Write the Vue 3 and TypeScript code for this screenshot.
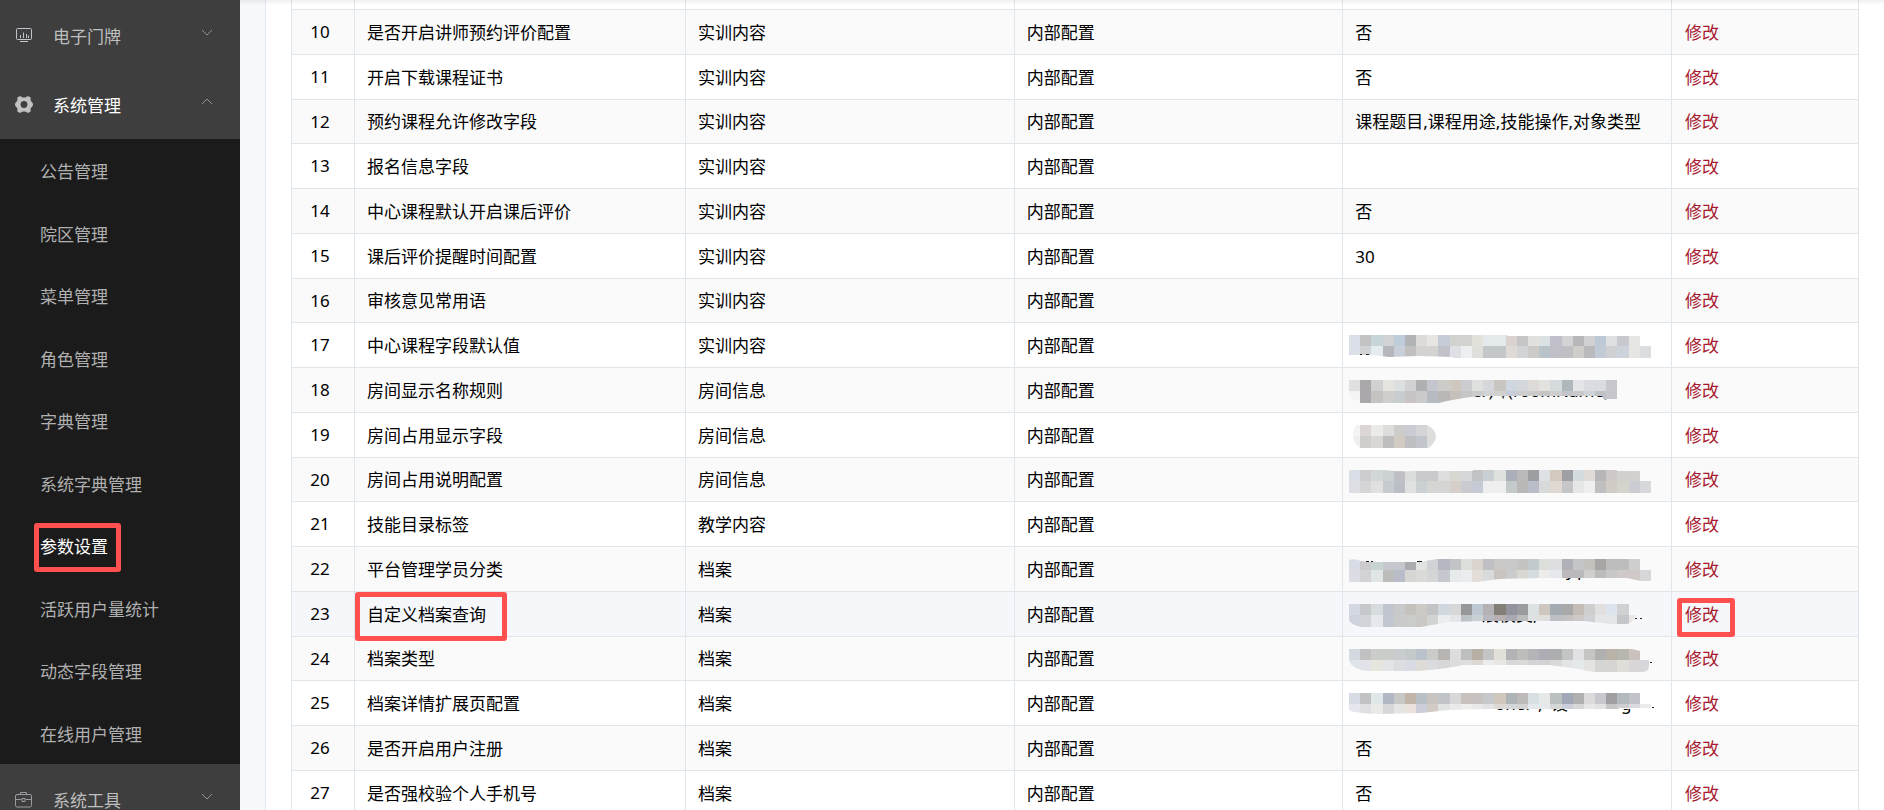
<script setup lang="ts">
interface Remnant { x: number; text: string }
interface Mosaic {
  top: string
  bottom: string
  shape: string
  remnants?: Remnant[]
  marks?: [number, number, number][]
}
interface Row {
  id: number
  name: string
  group: string
  value?: string
  mosaic?: Mosaic
}

const submenu: string[] = [
  '公告管理', '院区管理', '菜单管理', '角色管理', '字典管理',
  '系统字典管理', '参数设置', '活跃用户量统计', '动态字段管理', '在线用户管理',
]
const current = '参数设置'
const highlighted = 23

const rows: Row[] = [
  { id: 10, name: '是否开启讲师预约评价配置', group: '实训内容', value: '否' },
  { id: 11, name: '开启下载课程证书', group: '实训内容', value: '否' },
  { id: 12, name: '预约课程允许修改字段', group: '实训内容', value: '课程题目,课程用途,技能操作,对象类型' },
  { id: 13, name: '报名信息字段', group: '实训内容' },
  { id: 14, name: '中心课程默认开启课后评价', group: '实训内容', value: '否' },
  { id: 15, name: '课后评价提醒时间配置', group: '实训内容', value: '30' },
  { id: 16, name: '审核意见常用语', group: '实训内容' },
  {
    id: 17, name: '中心课程字段默认值', group: '实训内容',
    mosaic: {
      top: 'dbdfe8 c3c3c4 c8d5d8 d0d2d6 bfccda b0b4b7 dedada e7e6e3 c7cdd8 d2d3cf d2d3cf e3e1d9 e4e9ec e4e9ec dad2cf c6c6c6 e1e1dd dbe1e3 c1c0ca d3d3d5 b7b7b9 d1d1d3 bdc9d6 dfe0e3 c8c9ce e6e6e3 e6e6e3',
      bottom: 'dbdfe8 d0d4d7 e5ecee b5b7bd c8cfd8 c2bfc1 d5d2d2 d5d2d2 c1c2ca dfe0e6 eeeff0 dfdfdb c3c7ca c3c7ca dfdad6 d1d5d7 cdcbc8 b8c3ca c0bfc7 c0bfc4 cfccc9 bab9bc c2cad5 cfd0d3 cdd3da e5e5e2 dcdddf',
      shape: 'M0 0H158V1H291V11H302V23H104V22L70 21L40 22L22 20H0Z',
      marks: [[11, 19, 2], [17, 19, 3]],
    },
  },
  {
    id: 18, name: '房间显示名称规则', group: '房间信息',
    mosaic: {
      top: 'e0e0e0 aaa8aa d1d1d2 e5e4df dce0e1 d2d2d5 afb0b2 c3c6cf cdccc9 cfc8be cccdd1 dfe1df d6d7da c9c6c1 ced7e0 d4d8dc dedad8 e2e2df d5dadd adb7bc e4e5e8 dadcdf d8dbe0 c7c6cc',
      bottom: 'f3f3f3 aaa8aa c4c3c2 cfcecc c8cdcf c8c4c6 c9cac9 b6bac1 b9b8b7 c6c0ba c5c5c8 cacbcb d1d2d3 d1d1d0 c6cdd7 cbcdcf cccbca c5c5c6 cfcecc c2c6ca cac7cb d0d3d7 bfc3c5 c7c6cc',
      shape: 'M0 0H269V19H254V16H130Q105 19 90 23H11V21Q2 20 0 14Z',
      remnants: [{ x: 123, text: 'er) $(roomName)' }],
    },
  },
  {
    id: 19, name: '房间占用显示字段', group: '房间信息',
    mosaic: {
      top: 'f3f4f4 dcd7d4 ebecea dddddc cccccb c9ccd2 d4d4d7 dedede',
      bottom: 'efefef d0cdcd d8d7d4 bebebe d1cbc4 bebfc3 c2c6cc dddddc',
      shape: 'M7 0H78Q87 4 87 12Q86 19 79 23H12Q4 19 4 10Q4 3 7 0Z',
    },
  },
  {
    id: 20, name: '房间占用说明配置', group: '房间信息',
    mosaic: {
      top: 'd9dee6 cdccd0 d1d6d6 ccd2d4 c0bfc6 dbdddd cacace cacace dddddd d7d8d2 d5d7d9 c2c3c5 cacfd3 dfe1dd abafb9 bababa 9d9ea2 dde1e5 d4c9bf 9fa0a4 d5dcdf e0dbd6 b8b6b9 cec9c8 d2d0cc d2d1ce',
      bottom: 'dddfe5 d5d5d8 e2dfe1 c6cbd0 bbbec5 e0e2e2 cbd0d3 d5d5d3 d5d5d3 d5cec9 cacbd0 c5cad4 efefef efefef c4cac9 b9b8b7 b9bdc8 d7dad9 dfd9d2 c6c6c8 e5e6e6 eeeff1 bfbfbf d1cbc6 d4d3cc cccdd3 d7d8dc',
      shape: 'M0 0H35Q50 2 65 1H124V0H268V1H291V11H302V23H0Z',
    },
  },
  { id: 21, name: '技能目录标签', group: '教学内容' },
  {
    id: 22, name: '平台管理学员分类', group: '档案',
    mosaic: {
      top: 'd8dce5 cccace c6d3d1 c5c9cd c4c8cc abacb0 e1e3e3 d1d2d5 b5b7c1 c3c4c8 dcdeda dbd3cd bfc0c3 cbc8c8 c9c9ca c4c5c2 c2cacd dcdeda dedee1 b0b0b8 c4c5c6 c5c1bd a7a6a5 bdbdbd bdbdbd cfcfd0',
      bottom: 'dcdde4 d3d3d6 e0e5e5 bcbcba b8bdc9 d6d6d5 dadad6 d4d6d5 c7c8cf e5eaeb ebeced e3ddd8 d9dadc c9c4c0 cccbcb dad7d3 d5dce0 eeebea e5e8ed bdb8bb bab9bc cfcecd bbbbbc c7c7c8 cfcac7 cfcac7 d7d7d9',
      shape: 'M0 1Q5 -1 12 2L22 3H70L88 0H291V11H302V22H292L278 19H190L150 20L128 23H0Z',
      remnants: [{ x: 200, text: ',' }, { x: 217, text: 'y' }, { x: 228, text: 'p' }],
      marks: [[17, 2, 3], [22, 2, 2], [68, 2, 5]],
    },
  },
  {
    id: 23, name: '自定义档案查询', group: '档案',
    mosaic: {
      top: 'd3d8e3 c7c8cc d6dbdd c1c5ce c8c9cb c5c1bd cdc9c5 c1c3c5 d1d7df d7d7d7 969799 bdc8d2 b5b1b5 827e78 92939c 9b9ca0 dce1e4 cdc7bf a4abb3 a9a9aa c4bdb7 cececf e2dfdf dee4ed d0d1d3',
      bottom: 'ced2da d2d4d9 e7e8eb c2c6ce cacacb caccc9 cac7c4 d2d3d3 ebedef e4e5e8 bdc1c8 cbd0d4 b8b8c0 b7b0b3 aaa9b1 b9bbbc dee0e2 e1dfdd bcbfc4 c3c1c2 cec9c8 d0d0d7 e4e6e8 e4e6e8 c4c6ca e9e6e3',
      shape: 'M0 0H280V11H287Q283 20 277 20H262L235 17H135L100 18L72 23H12Q2 21 0 16Z',
      remnants: [{ x: 133, text: '展模类,' }],
      marks: [[286, 14, 2], [291, 14, 2]],
    },
  },
  {
    id: 24, name: '档案类型', group: '档案',
    mosaic: {
      top: 'd3d8e1 c1c1c3 cbcdca cbcdca c9cdcf c4c9ca bac2cc cbcbca b8b4b1 dddddd bebfbf b8afa5 c3c6c4 e3e0da b3b3b5 bdbdb9 b5b4b9 aeadb5 adaeb0 c3c5c5 e1e1e4 c5c5c4 b0b1af b8b2a9 b7b6af ccc2bd c1c1c4',
      bottom: 'e2e4eb e1e3e8 e6e5de e3e4e7 dcdde1 d8dbe4 dfdbd7 dadbde d8d7d8 dcdcdd dddddd dcd9d5 eaebeb e8e6e4 d8d8d6 dad9d8 d3d3d5 d3d3d5 dad9d9 e2e4e5 e6e9ec e4e3e1 d5d6d3 d7d5d3 dfded8 d9d6d8 d7d7db',
      shape: 'M0 0H283L291 2V11H300V17Q300 23 292 23H245Q220 18 200 16H115Q85 22 58 22H18Q3 20 0 12Z',
      marks: [[301, 13, 2]],
    },
  },
  {
    id: 25, name: '档案详情扩展页配置', group: '档案',
    mosaic: {
      top: 'd7dbe3 c2c2c5 e0e7e8 b2b8c3 c8c8c6 c1b4a8 b9c0c5 cac4c0 c1c4c8 d9d8d8 c8c1bd c8c3c0 c7c8cb d1c8bd afb4b9 bebaba d8dfe3 e6e9e8 b9c0bf a1a8b6 b0b0b1 dcdadb c7c7cd a29fa2 b4b9bd c2c2cb',
      bottom: 'e4e7ed e0e0e2 eaeae9 d7d7d9 e5e6e4 ece2dd cccfda d2cac4 e1e2e2 eaeaeb f0efee e9e9e9 e1e3e6 dddad6 d4d6d8 d4d3d4 e3e8ec e6e9eb d4d7d6 cbced8 d7d7d8 e8e7e8 e2e2e2 c7c5c6 cecfd1 dadadf e9ebec',
      shape: 'M0 0H291V11H302V15H270V16H140L100 17L72 20L30 21Q4 20 0 17Z',
      remnants: [{ x: 146, text: 'oner' }, { x: 189, text: ',' }, { x: 202, text: '设' }, { x: 272, text: 'g' }],
      marks: [[303, 14, 2]],
    },
  },
  { id: 26, name: '是否开启用户注册', group: '档案', value: '否' },
  { id: 27, name: '是否强校验个人手机号', group: '档案', value: '否' },
]

interface Cell { x: number; y: number; w: number; h: number; fill: string }
function cells(m: Mosaic): Cell[] {
  const edge = (i: number): number => Math.round((i * 302) / 27)
  const line = (colors: string, y: number, h: number): Cell[] =>
    colors.split(' ').map((c, i) => ({ x: edge(i), y, w: edge(i + 1) - edge(i), h, fill: '#' + c }))
  return [...line(m.top, 0, 11), ...line(m.bottom, 11, 12)]
}
</script>

<template>
  <div class="layout">
    <nav class="sidebar">
      <button class="menu-title" type="button">
        <svg class="menu-icon" viewBox="0 0 18 18" fill="none" stroke="#c0c4cc" aria-hidden="true">
          <rect x="1.5" y="1.5" width="15" height="11" rx="1" />
          <path d="M5.500 8v3M8.500 5.500v5.500M11.500 7v4M13.500 8.500v2.500M5 14.500h8" />
        </svg>
        <span>电子门牌</span>
        <svg class="arrow" viewBox="0 0 12 8" aria-hidden="true"><path d="M1 1l5 5 5-5" /></svg>
      </button>
      <button class="menu-title open" type="button" aria-expanded="true">
        <svg class="menu-icon" viewBox="0 0 18 18" aria-hidden="true">
          <path
            fill="#c0c0c0" fill-rule="evenodd"
            d="M4 .5q2-1 3 .7q2 .7 4 0q1-1.700 3-.7l1.200.8q.9.8.3 2.400q.5 1.800 1.300 2.300q1.200.8 1.200 2.500t-1.200 2.500q-.8.5-1.300 2.300q.6 1.600-.3 2.400l-1.200.8q-2 1-3-.7q-2-.7-4 0q-1 1.700-3 .7l-1.200-.8q-.9-.8-.3-2.400q-.5-1.800-1.300-2.300q-1.200-.8-1.200-2.500t1.200-2.500q.8-.5 1.300-2.300q-.6-1.600.3-2.400zM9 5.100a3.400 3.400 0 1 0 0 6.800a3.400 3.400 0 1 0 0-6.800z"
          />
        </svg>
        <span>系统管理</span>
        <svg class="arrow" viewBox="0 0 12 8" aria-hidden="true"><path d="M1 6l5-5 5 5" /></svg>
      </button>
      <ul class="submenu">
        <li v-for="item in submenu" :key="item">
          <a href="#" :class="{ current: item === current }">{{ item }}</a>
          <i v-if="item === current" class="mark mark-menu"></i>
        </li>
      </ul>
      <button class="menu-title" type="button">
        <svg class="menu-icon" viewBox="0 0 18 18" fill="none" stroke="#999b9f" aria-hidden="true">
          <rect x="0.5" y="3.500" width="16" height="12.500" rx="1.500" />
          <path d="M5.500 3.500v-2h6v2M.5 8.500h6M10.500 8.500h6M7 7.500h3v3H7z" />
        </svg>
        <span>系统工具</span>
        <svg class="arrow" viewBox="0 0 12 8" aria-hidden="true"><path d="M1 1l5 5 5-5" /></svg>
      </button>
    </nav>

    <main class="content">
      <div class="panel">
        <table>
          <colgroup>
            <col class="col-id" /><col class="col-name" /><col /><col /><col /><col class="col-action" />
          </colgroup>
          <tbody>
            <tr class="cut"><td v-for="n in 6" :key="n"></td></tr>
            <tr v-for="row in rows" :key="row.id" :class="{ hover: row.id === highlighted }">
              <td class="id">{{ row.id }}</td>
              <td>
                {{ row.name }}
                <i v-if="row.id === highlighted" class="mark mark-name"></i>
              </td>
              <td>{{ row.group }}</td>
              <td>内部配置</td>
              <td v-if="row.mosaic" class="masked">
                <svg viewBox="0 0 312 24" aria-hidden="true">
                  <defs>
                    <clipPath :id="'shape-' + row.id"><path :d="row.mosaic.shape" /></clipPath>
                    <clipPath :id="'rest-' + row.id"><path d="M0 16H312V24H0Z" /></clipPath>
                  </defs>
                  <g :clip-path="`url(#rest-${row.id})`">
                    <text v-for="r in row.mosaic.remnants" :key="r.x" :x="r.x" y="17">{{ r.text }}</text>
                  </g>
                  <g :clip-path="`url(#shape-${row.id})`" shape-rendering="crispEdges">
                    <rect
                      v-for="c in cells(row.mosaic)" :key="c.x + '-' + c.y"
                      :x="c.x" :y="c.y" :width="c.w" :height="c.h" :fill="c.fill"
                    />
                  </g>
                  <rect
                    v-for="m in row.mosaic.marks" :key="m[0]"
                    :x="m[0]" :y="m[1]" :width="m[2]" height="1" fill="#222"
                  />
                </svg>
              </td>
              <td v-else>{{ row.value }}</td>
              <td>
                <button class="edit" type="button">修改</button>
                <i v-if="row.id === highlighted" class="mark mark-edit"></i>
              </td>
            </tr>
          </tbody>
        </table>
      </div>
    </main>
  </div>
</template>

<style>
body {
  margin: 0;
  overflow: hidden;
}
</style>

<style scoped>
.layout {
  display: flex;
  height: 100vh;
  overflow: hidden;
  font-family: "Noto Sans", "Noto Sans CJK SC", sans-serif;
  font-size: 17px;
  line-height: 24px;
  color: #000;
}
button {
  border: 0;
  padding: 0;
  background: none;
  font: inherit;
  cursor: pointer;
}
.sidebar {
  flex: none;
  width: 240px;
  background: #3e3e3e;
}
.menu-title {
  display: flex;
  align-items: center;
  box-sizing: border-box;
  width: 100%;
  height: 70px;
  padding: 4px 27px 0 15px;
  color: #bfbfbf;
  text-align: left;
}
.menu-title:first-child {
  height: 69px;
}
.menu-title.open {
  color: #fff;
}
.menu-title span {
  flex: 1;
  margin-left: 20px;
}
.menu-icon {
  width: 18px;
  height: 18px;
  margin-bottom: 2px;
}
.arrow {
  width: 12px;
  height: 8px;
  margin-bottom: 8px;
  fill: none;
  stroke: #909399;
}
.submenu {
  margin: 0;
  padding: 0;
  list-style: none;
  background: #1b1b1b;
}
.submenu li {
  position: relative;
  height: 62px;
}
.submenu li:nth-child(even) {
  height: 63px;
}
.submenu a {
  display: flex;
  align-items: center;
  height: 100%;
  padding: 4px 0 0 40px;
  box-sizing: border-box;
  color: #b0b0b0;
  text-decoration: none;
}
.submenu a.current {
  color: #fff;
}
.content {
  flex: 1;
  min-width: 0;
  padding-left: 25px;
  background: #f6f8fa;
  position: relative;
}
.content::before {
  content: "";
  position: absolute;
  z-index: 1;
  inset: 0 0 auto;
  height: 5px;
  background: linear-gradient(rgba(0, 0, 0, 0.06), rgba(0, 0, 0, 0));
}
.panel {
  min-height: 100%;
  padding: 0 25px;
  border-left: 1px solid #e2e8ef;
  background: #fff;
}
table {
  width: 100%;
  table-layout: fixed;
  border-spacing: 0;
  border-left: 1px solid #dfe6ec;
}
.col-id {
  width: 63px;
}
.col-name {
  width: 331px;
}
.col-action {
  width: 187px;
}
td {
  position: relative;
  box-sizing: border-box;
  height: 45px;
  padding: 1px 12px 0;
  border-right: 1px solid #dfe6ec;
  border-bottom: 1px solid #dfe6ec;
  white-space: nowrap;
}
tr:nth-child(4n) td {
  height: 44px;
}
tr.cut td {
  height: 10px;
  padding: 0;
}
tr:nth-child(even) td {
  background: #fafafa;
}
tr.hover td {
  background: #f5f7fa;
}
td.id {
  padding: 0 6px 0 0;
  text-align: center;
}
td.masked {
  padding: 4px 0 0 6px;
}
.masked svg {
  display: block;
  width: 312px;
  height: 24px;
}
.edit {
  padding-left: 1px;
  color: #a6192e;
}
.mark {
  position: absolute;
  box-sizing: border-box;
  border: 5px solid #ff5050;
  border-radius: 3px;
  pointer-events: none;
}
.mark-menu {
  left: 34px;
  top: 9px;
  width: 87px;
  height: 49px;
}
.mark-name {
  z-index: 1;
  left: 0;
  top: 0;
  width: 152px;
  height: 49px;
}
.mark-edit {
  left: 5px;
  top: 6px;
  width: 58px;
  height: 39px;
}
</style>
